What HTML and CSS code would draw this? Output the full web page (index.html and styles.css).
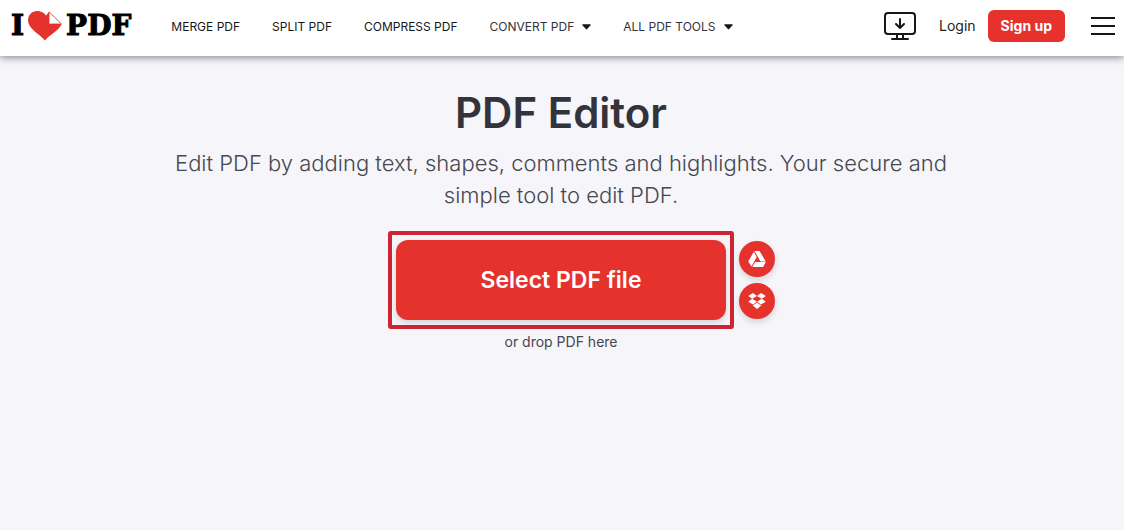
FILE: index.html
```
<!DOCTYPE html>
<html lang="en">
<head>
  <meta charset="UTF-8" />
  <meta name="viewport" content="width=device-width, initial-scale=1.0" />
  <title>PDF Editor</title>
  <link rel="stylesheet" href="styles.css">
</head>
<body>
<header class="header">
  <a class="logo" href="#">
    <span>I</span>
    <svg class="logo-heart" viewBox="0 0 34 30" aria-hidden="true">
      <path fill="#e5322d" d="M17 29.500C13 24 0 18 0 9.500 0 4 4 0 9 0c4 0 7 1.500 9 4.500L21 1l12.500 12C31 20 21 24 17 29.500z"/>
      <path fill="#fff" stroke="#e5322d" stroke-width=".8" stroke-linejoin="round" d="M21 .8V13h12.500z"/>
    </svg>
    <span>PDF</span>
  </a>
  <nav class="nav">
    <a href="#">MERGE PDF</a>
    <a href="#">SPLIT PDF</a>
    <a href="#">COMPRESS PDF</a>
    <a class="nav-drop" href="#">CONVERT PDF<svg viewBox="0 0 10 6" aria-hidden="true"><path d="M1 0h8q1.200 0 .5 1L5.700 5.300q-.7.700-1.400 0L.5 1Q-.2 0 1 0z"/></svg></a>
    <a class="nav-drop" href="#">ALL PDF TOOLS<svg viewBox="0 0 10 6" aria-hidden="true"><path d="M1 0h8q1.200 0 .5 1L5.700 5.300q-.7.700-1.400 0L.5 1Q-.2 0 1 0z"/></svg></a>
  </nav>
  <div class="actions">
    <a class="desktop" href="#" aria-label="Desktop app">
      <svg viewBox="0 0 32 28" fill="none" stroke="#161616" stroke-width="2" stroke-linecap="round" stroke-linejoin="round">
        <rect x="1" y="1" width="30" height="21" rx="3"/>
        <path d="M13 22v5M19 22v5M8 27h16M16 7v9M12 12l4 4 4-4"/>
      </svg>
    </a>
    <a class="login" href="#">Login</a>
    <a class="signup" href="#">Sign up</a>
    <button class="menu" type="button" aria-label="Menu">
      <svg viewBox="0 0 24 18" stroke="#161616" stroke-width="2"><path d="M0 1h24M0 9h24M0 17h24"/></svg>
    </button>
  </div>
</header>

<main class="tool">
  <h1>PDF Editor</h1>
  <p class="subtitle">Edit PDF by adding text, shapes, comments and highlights. Your secure and simple tool to edit PDF.</p>
  <div class="uploader">
    <div class="select-frame">
      <button class="select" type="button">Select PDF file</button>
    </div>
    <div class="sources">
      <button class="source" type="button" aria-label="Google Drive">
        <svg viewBox="0 0 18 16" fill="#fff"><path d="M6.500 0h5l6.300 10.400h-5.300zM5.800.8l2.900 5.100-5.200 9.500L.2 10.500zM7.200 11h10.600L15 16H4.300z"/></svg>
      </button>
      <button class="source" type="button" aria-label="Dropbox">
        <svg viewBox="0 0 18 16" fill="#fff"><path d="M5 0l4 2.900L4.200 5.800.2 2.900zM13 0l4.800 2.900-4 2.900L9 2.900zM4.200 5.800L9 8.700l-4 2.900-4.800-2.900zM13.800 5.800l4 2.900L13 11.600 9 8.700zM9 9.700l4.300 2.900L9 16l-4.300-3.400z"/></svg>
      </button>
    </div>
  </div>
  <p class="drop">or drop PDF here</p>
</main>
</body>
</html>
```
FILE: styles.css
```
body {
  margin: 0;
  background: #f5f5fa;
  color: #33333b;
  font-family: Inter, "Open Sans", sans-serif;
}

a {
  color: inherit;
  text-decoration: none;
}

button {
  padding: 0;
  border: 0;
  font-family: inherit;
  cursor: pointer;
}

svg {
  display: block;
}

.header {
  display: flex;
  align-items: center;
  box-sizing: border-box;
  height: 56px;
  padding: 0 9px 4px 11px;
  background: #fff;
  box-shadow: 0 1px 8px rgba(0, 0, 0, 0.5);
}

.logo {
  display: flex;
  align-items: center;
  gap: 4px;
  color: #000;
  font: bold 28px/32px "DejaVu Serif", serif;
  -webkit-text-stroke: 1px #000;
}

.logo-heart {
  width: 34px;
  height: 30px;
}

.nav {
  display: flex;
  align-items: center;
  gap: 32px;
  margin-left: 40px;
  padding-top: 2px;
  color: #161616;
  font-size: 12px;
  line-height: 16px;
  white-space: nowrap;
}

.nav-drop {
  display: flex;
  align-items: center;
  gap: 8px;
  color: #33333b;
}

.nav-drop svg {
  width: 9px;
  height: 6px;
  fill: #161616;
}

.actions {
  display: flex;
  align-items: center;
  margin-left: auto;
  font-size: 14px;
  line-height: 20px;
}

.desktop svg {
  width: 32px;
  height: 28px;
}

.login {
  margin: 0 12px 0 23px;
  color: #222;
}

.signup {
  padding: 6px 13px;
  border-radius: 6px;
  background: #e5322d;
  color: #fff;
  font-weight: 700;
}

.menu {
  margin-left: 26px;
  background: none;
}

.menu svg {
  width: 24px;
  height: 18px;
}

.tool {
  padding: 31px 26px 31px 24px;
  text-align: center;
}

h1 {
  margin: 0;
  font-size: 42px;
  font-weight: 600;
  line-height: 52px;
}

.subtitle {
  max-width: 800px;
  margin: 8px auto 20px;
  color: #47474f;
  font-size: 22px;
  font-weight: 350;
  line-height: 32px;
}

.uploader {
  display: grid;
  grid-template-columns: 1fr minmax(0, 346px) 1fr;
  align-items: center;
  gap: 5px;
}

.select-frame {
  grid-column: 2;
  padding: 5px 4px;
  border: 4px solid #cd2533;
  border-radius: 3px;
}

.select {
  width: 100%;
  padding: 24px;
  border-radius: 12px;
  background: #e5322d;
  box-shadow: 0 3px 6px rgba(0, 0, 0, 0.14);
  color: #fff;
  font-size: 23px;
  font-weight: 600;
  line-height: 32px;
}

.sources {
  display: grid;
  justify-items: start;
  gap: 6px;
}

.source {
  display: grid;
  place-items: center;
  width: 36px;
  height: 36px;
  border-radius: 50%;
  background: #e5322d;
  box-shadow: 0 3px 6px rgba(0, 0, 0, 0.14);
}

.source svg {
  width: 18px;
  height: 16px;
}

.drop {
  margin: 3px 0 0;
  color: #47474f;
  font-size: 14px;
  line-height: 20px;
}
```
